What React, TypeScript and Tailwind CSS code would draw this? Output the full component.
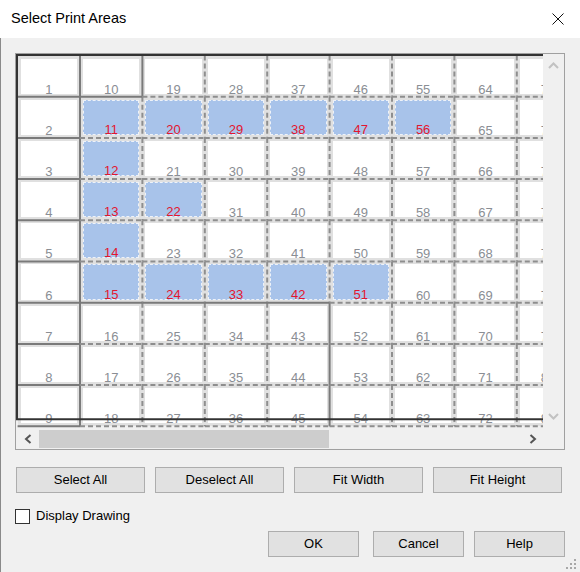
import React from "react";

const COLS = 9;
const ROWS = 9;
const CW = 62.4;
const RH = 41.2;
const OX = 1.6;
const OY = 1.5;
const SELECTED = new Set([11, 20, 29, 38, 47, 56, 12, 13, 22, 14, 15, 24, 33, 42, 51]);

// solid segments (others dashed)
const V_SOLID = new Set<string>([
  "1,0", "1,1", "1,2", "1,3", "1,4", "1,5", "1,6", "1,7", "1,8",
  "2,0",
  "5,6", "5,7", "5,8",
]);
const H_SOLID = new Set<string>([
  "1,0", "2,0", "3,0", "4,0", "5,0", "6,0", "7,0", "8,0", "9,0",
  "1,1", "6,1", "6,2", "6,3", "6,4",
]);

function Cell({ n }: { n: number }) {
  const sel = SELECTED.has(n);
  return (
    <div className="w-[62.4px] h-[41.2px] bg-[#e0e0e0] p-[3px]">
      <div
        className={
          sel
            ? "w-full h-full bg-[#a8c3ea] border border-dashed border-[#eef2f8] flex items-end justify-center"
            : "w-full h-full bg-white flex items-end justify-center"
        }
      >
        <span
          className={
            sel
              ? "text-[13px] leading-none text-[#e3162f] translate-y-[2px]"
              : "text-[13px] leading-none text-[#8a8e94] translate-y-[2px]"
          }
        >
          {n}
        </span>
      </div>
    </div>
  );
}

function GridLines() {
  const segs: React.ReactNode[] = [];
  for (let b = 1; b < COLS; b++) {
    for (let r = 0; r < ROWS; r++) {
      const x = OX + CW * b;
      const solid = V_SOLID.has(`${b},${r}`);
      segs.push(
        <line
          key={`v${b}-${r}`}
          x1={x}
          x2={x}
          y1={OY + RH * r}
          y2={OY + RH * (r + 1)}
          stroke={solid ? "#7a7a7a" : "#8e8e8e"}
          strokeWidth={2}
          strokeDasharray={solid ? undefined : "5 3"}
        />
      );
    }
  }
  for (let k = 1; k <= ROWS; k++) {
    for (let c = 0; c < COLS; c++) {
      const y = OY + RH * k;
      const solid = H_SOLID.has(`${k},${c}`);
      segs.push(
        <line
          key={`h${k}-${c}`}
          y1={y}
          y2={y}
          x1={OX + CW * c}
          x2={OX + CW * (c + 1)}
          stroke={solid ? "#7a7a7a" : "#8e8e8e"}
          strokeWidth={2}
          strokeDasharray={solid ? undefined : "5 3"}
        />
      );
    }
  }
  return (
    <svg className="absolute left-0 top-0 pointer-events-none" width={527} height={374}>
      {segs}
      <line x1={0} x2={527} y1={1} y2={1} stroke="#333" strokeWidth={2} />
      <line x1={1} x2={1} y1={0} y2={366} stroke="#333" strokeWidth={2} />
      <line x1={0} x2={527} y1={365.3} y2={365.3} stroke="#333" strokeWidth={2} />
    </svg>
  );
}

function Btn({ label, w }: { label: string; w: string }) {
  return (
    <div
      className={`${w} h-[26px] bg-[#e1e1e1] border border-[#adadad] flex items-center justify-center text-[13px] text-black`}
    >
      {label}
    </div>
  );
}

export default function App() {
  const cells: React.ReactNode[] = [];
  for (let r = 0; r < ROWS; r++) {
    for (let c = 0; c < COLS; c++) {
      const n = c * 9 + r + 1;
      cells.push(<Cell key={n} n={n} />);
    }
  }
  return (
    <div
      className="w-[580px] h-[572px] bg-[#f0f0f0] flex flex-col relative overflow-hidden"
      style={{ fontFamily: '"Liberation Sans", Arial, sans-serif' }}
    >
      {/* title bar */}
      <div className="h-[38px] bg-white flex items-center justify-between pl-[11px] pr-[16px] shrink-0">
        <span className="text-[14.5px] text-black">Select Print Areas</span>
        <svg width="12" height="12" viewBox="0 0 12 12">
          <path d="M0.5 0.5 L11.5 11.5 M11.5 0.5 L0.5 11.5" stroke="#111" strokeWidth="1" />
        </svg>
      </div>

      {/* body */}
      <div className="flex-1 border-l border-[#8a8a8a] pl-[14px] pt-[15px] flex flex-col">
        {/* grid control */}
        <div className="w-[550px] h-[397px] border border-[#a0a0a0] grid grid-cols-[527px_21px] grid-rows-[374px_21px]">
          <div className="relative overflow-hidden bg-[#f0f0f0]">
            <div className="pl-[1.6px] pt-[1.5px]">
              <div className="grid grid-cols-[repeat(9,62.4px)] auto-rows-[41.2px] w-max">{cells}</div>
            </div>
            <GridLines />
          </div>
          {/* vertical scrollbar */}
          <div className="bg-[#f0f0f0] flex flex-col justify-between items-center py-[8px]">
            <svg width="11" height="7" viewBox="0 0 11 7">
              <path d="M1 6 L5.5 1.5 L10 6" stroke="#c2c2c2" strokeWidth="2" fill="none" />
            </svg>
            <svg width="11" height="7" viewBox="0 0 11 7">
              <path d="M1 1 L5.5 5.5 L10 1" stroke="#c2c2c2" strokeWidth="2" fill="none" />
            </svg>
          </div>
          {/* horizontal scrollbar */}
          <div className="bg-[#f0f0f0] flex items-center">
            <div className="w-[23px] h-full flex items-center justify-center">
              <svg width="8" height="10" viewBox="0 0 8 10">
                <path d="M6.5 1 L2 5 L6.5 9" stroke="#555" strokeWidth="2" fill="none" />
              </svg>
            </div>
            <div className="flex-1 h-full pt-[2px] pb-[1px]">
              <div className="w-[290px] h-full bg-[#cdcdcd]" />
            </div>
            <div className="w-[21px] h-full flex items-center justify-center">
              <svg width="8" height="10" viewBox="0 0 8 10">
                <path d="M1.5 1 L6 5 L1.5 9" stroke="#555" strokeWidth="2" fill="none" />
              </svg>
            </div>
          </div>
          <div className="bg-[#f0f0f0]" />
        </div>

        {/* action buttons */}
        <div className="mt-[17px] ml-[1px] w-[546px] flex justify-between">
          <Btn label="Select All" w="w-[129px]" />
          <Btn label="Deselect All" w="w-[129px]" />
          <Btn label="Fit Width" w="w-[129px]" />
          <Btn label="Fit Height" w="w-[129px]" />
        </div>

        {/* checkbox */}
        <div className="mt-[15px] h-[16px] flex items-center">
          <div className="w-[15px] h-[15px] border border-[#333] bg-white" />
          <span className="ml-[6px] text-[13px] text-black">Display Drawing</span>
        </div>

        {/* dialog buttons */}
        <div className="mt-[7px] flex pl-[253px]">
          <Btn label="OK" w="w-[91px]" />
          <div className="w-[14px]" />
          <Btn label="Cancel" w="w-[91px]" />
          <div className="w-[10px]" />
          <Btn label="Help" w="w-[91px]" />
        </div>
      </div>

      {/* resize grip */}
      <svg className="absolute right-[3px] bottom-[2px]" width="12" height="12" viewBox="0 0 12 12">
        <rect x="9" y="1" width="2" height="2" fill="#a8a8a8" />
        <rect x="5" y="5" width="2" height="2" fill="#a8a8a8" />
        <rect x="9" y="5" width="2" height="2" fill="#a8a8a8" />
        <rect x="1" y="9" width="2" height="2" fill="#a8a8a8" />
        <rect x="5" y="9" width="2" height="2" fill="#a8a8a8" />
        <rect x="9" y="9" width="2" height="2" fill="#a8a8a8" />
      </svg>
    </div>
  );
}
